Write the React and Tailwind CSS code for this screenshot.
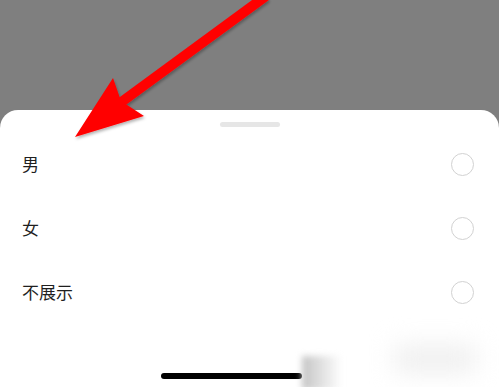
import React from 'react';

const options = ['男', '女', '不展示'];

const App = () => {
    return (
        <div className="relative w-[499px] h-[387px] overflow-hidden bg-[#7f7f7f] flex flex-col" style={{ fontFamily: '"Noto Sans CJK SC", "Noto Sans", sans-serif' }}>
            {/* Dimmed page behind the sheet */}
            <div className="h-[110px] shrink-0"></div>

            {/* Bottom sheet */}
            <div className="flex-1 bg-white rounded-t-[18px] flex flex-col">
                <div className="flex justify-center pt-[12px]">
                    <div className="w-[60px] h-[5px] rounded-full bg-[#e6e6e6]"></div>
                </div>
                <div className="flex flex-col mt-[5px]">
                    {options.map((label) => (
                        <div key={label} className="h-16 flex items-center justify-between pl-[22px] pr-[25px]">
                            <span className="text-[17px] text-[#1f1f1f]">{label}</span>
                            <span className="w-[23px] h-[23px] rounded-full border border-[#d2d2d2]"></span>
                        </div>
                    ))}
                </div>
                <div className="flex justify-center mt-[49px] pr-[37px]">
                    <div className="w-[141px] h-[6px] rounded-full bg-black"></div>
                </div>
            </div>

            {/* Blurred patches at the bottom */}
            <div className="absolute left-[302px] top-[356px] w-[40px] h-[34px] bg-gradient-to-r from-[#c4c4c4] to-white/0 blur-[3px]"></div>
            <div className="absolute left-[395px] top-[345px] w-[80px] h-[28px] bg-[#efefef] blur-md"></div>

            {/* Annotation arrow */}
            <svg className="absolute inset-0" width="499" height="387" viewBox="0 0 499 387">
                <defs>
                    <filter id="sh" x="-20%" y="-20%" width="140%" height="140%">
                        <feDropShadow dx="1" dy="2" stdDeviation="1.5" floodColor="#000" floodOpacity="0.3" />
                    </filter>
                </defs>
                <g filter="url(#sh)" fill="#ff0000">
                    <line x1="266" y1="-4" x2="116" y2="106" stroke="#ff0000" strokeWidth="10" />
                    <polygon points="75,137 113,78 121,101 144,116" />
                </g>
            </svg>
        </div>
    );
};

export default App;
